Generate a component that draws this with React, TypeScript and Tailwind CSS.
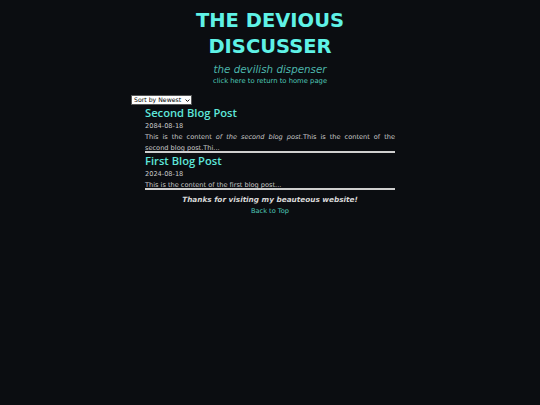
import React, { useState } from 'react';

interface Post {
  title: string;
  date: string;
  body: React.ReactNode;
}

const posts: Post[] = [
  {
    title: 'Second Blog Post',
    date: '2084-08-18',
    body: (
      <>
        This is the content <em>of the second blog post.</em>This is the content of the second blog post.Thi...
      </>
    ),
  },
  {
    title: 'First Blog Post',
    date: '2024-08-18',
    body: <>This is the content of the first blog post...</>,
  },
];

const App: React.FC = () => {
  const [sort, setSort] = useState('newest');

  return (
    <div className="min-h-[405px] bg-[#0b0d11] text-[#c9c9c9] font-['DejaVu_Sans',sans-serif]">
      <header className="flex flex-col items-center pt-[8px]">
        <h1 className="text-[19.5px] leading-[26px] font-bold text-[#5ff2e6] text-center">
          THE DEVIOUS
          <br />
          DISCUSSER
        </h1>
        <p className="mt-[2px] text-[10.3px] leading-[14px] italic text-[#4cb5ab]">the devilish dispenser</p>
        <a href="#" className="text-[6.8px] leading-[11px] text-[#4fc8b8]">
          click here to return to home page
        </a>
      </header>

      <main className="w-[278px] mx-auto mt-[8px]">
        <div className="relative w-[61px] h-[10px]">
          <select
            value={sort}
            onChange={(e) => setSort(e.target.value)}
            className="appearance-none block w-full h-full bg-white text-black text-[6.2px] leading-[8px] border border-[#555] pl-[2px] pr-[8px] py-0"
          >
            <option value="newest">Sort by Newest</option>
            <option value="oldest">Sort by Oldest</option>
          </select>
          <svg
            viewBox="0 0 8 8"
            className="absolute right-[2px] top-[3px] w-[5px] h-[5px] pointer-events-none"
            fill="none"
            stroke="#111"
            strokeWidth="1.6"
          >
            <path d="M1 2.5 L4 5.5 L7 2.5" />
          </svg>
        </div>

        <div className="mx-[14px]">
          {posts.map((p) => (
            <article key={p.title} className="border-b-2 border-[#cfcfcf]">
              <h2 className="pt-[1px] text-[11.2px] leading-[14px] font-semibold text-[#5ee6da] font-['Open_Sans',sans-serif]">
                {p.title}
              </h2>
              <div className="text-[6.6px] leading-[11px] mt-[1px]">{p.date}</div>
              <p className="-mb-[3px] text-[6.6px] leading-[11px] text-justify">{p.body}</p>
            </article>
          ))}
        </div>

        <footer className="flex flex-col items-center mt-[4px]">
          <p className="text-[7.3px] leading-[12px] italic font-semibold text-[#d8d8d8]">
            Thanks for visiting my beauteous website!
          </p>
          <a href="#" className="text-[6.6px] leading-[10px] text-[#4fc8b8]">
            Back to Top
          </a>
        </footer>
      </main>
    </div>
  );
};

export default App;
